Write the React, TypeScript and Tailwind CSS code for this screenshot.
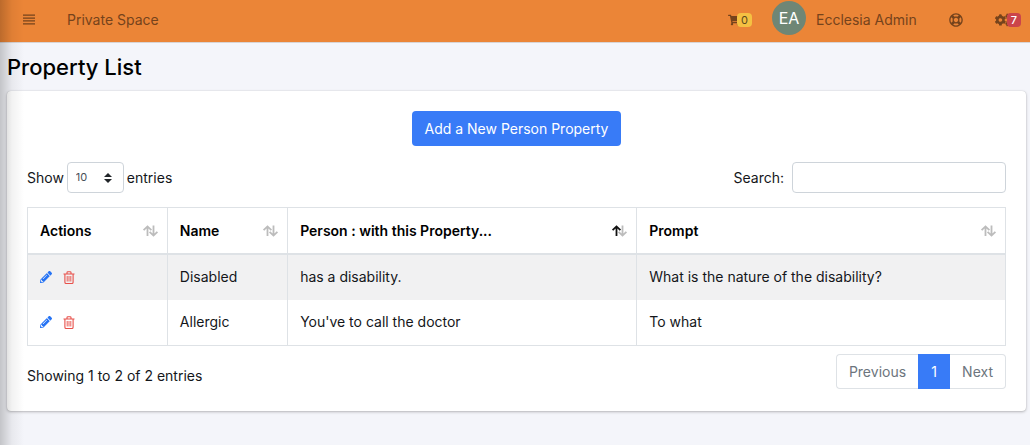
import { FaCogs, FaPencilAlt, FaRegLifeRing, FaShoppingCart } from "react-icons/fa";

type Sort = "none" | "asc";

const columns: { title: string; width: string; sort: Sort }[] = [
  { title: "Actions", width: "w-[14.3%]", sort: "none" },
  { title: "Name", width: "w-[12.3%]", sort: "none" },
  { title: "Person : with this Property...", width: "w-[35.7%]", sort: "asc" },
  { title: "Prompt", width: "w-[37.7%]", sort: "none" },
];

const rows = [
  { name: "Disabled", property: "has a disability.", prompt: "What is the nature of the disability?" },
  { name: "Allergic", property: "You've to call the doctor", prompt: "To what" },
];

function SortIcon({ sort }: { sort: Sort }) {
  return (
    <svg viewBox="0 0 17 12" className="h-3 w-[17px] shrink-0" fill="none" strokeWidth="1.8" aria-hidden="true">
      <path d="M11.5 0.5v10M7.6 6.8l3.9 3.8 3.9-3.8" stroke="#bcbcbc" />
      <path d="M5.5 11v-9.5M1.6 5.2l3.9-3.8 3.9 3.8" stroke={sort === "asc" ? "#111" : "#bcbcbc"} />
    </svg>
  );
}

function MenuIcon() {
  return (
    <svg viewBox="0 0 12 11" className="h-[11px] w-3" fill="currentColor" aria-hidden="true">
      <path d="M0 0.5h12v1.3H0zM0 3.4h12v1.3H0zM0 6.3h12v1.3H0zM0 9.2h12v1.3H0z" />
    </svg>
  );
}

function TrashIcon() {
  return (
    <svg viewBox="0 0 12 13" className="h-[13px] w-3" fill="none" stroke="currentColor" aria-hidden="true">
      <path d="M0.5 3h11M4 3V1.6q0-.9.9-.9h2.2q.9 0 .9.9V3M1.9 3v8.2q0 1.3 1.2 1.3h5.8q1.2 0 1.2-1.3V3" strokeWidth="1.1" />
      <path d="M4.2 5v5.5M6 5v5.5M7.8 5v5.5" strokeWidth="0.9" />
    </svg>
  );
}

function TopBar() {
  return (
    <header className="flex h-[43px] items-center border-b border-[#d8d4d4] bg-[#eb8537] pr-[9px] pl-[23px] text-[#75431c]">
      <button aria-label="Toggle menu" className="mr-8 pb-[3px]">
        <MenuIcon />
      </button>
      <a href="#" className="pb-[3px]">Private Space</a>
      <nav className="ml-auto flex h-full items-center pb-[3px]">
        <a href="#" aria-label="Cart" className="flex items-center">
          <FaShoppingCart className="size-3" />
          <span className="-ml-[3px] rounded-sm bg-[#f5c142] px-1 text-[11px] leading-[14px] text-[#5b4a1c]">0</span>
        </a>
        <a href="#" className="ml-5 flex items-center gap-[10px]">
          <span className="flex size-[34px] -translate-y-[2px] items-center justify-center rounded-full bg-[#6f8675] text-base text-white">EA</span>
          Ecclesia Admin
        </a>
        <a href="#" aria-label="Help" className="ml-8">
          <FaRegLifeRing className="size-[14px]" />
        </a>
        <a href="#" aria-label="Settings" className="ml-8 flex items-center">
          <FaCogs className="size-4" />
          <span className="-ml-1 rounded-sm bg-[#cb444a] px-1 text-[11px] leading-[14px] font-medium text-white">7</span>
        </a>
      </nav>
    </header>
  );
}

export default function App() {
  return (
    <div className="relative min-h-screen bg-[#f4f5fa] font-['Inter',sans-serif] text-sm text-[#14161a]">
      <TopBar />
      <main className="pr-1 pb-8 pl-[7px]">
        <h1 className="pt-2 pb-[7px] text-[22px] leading-[33px] font-medium text-black">Property List</h1>
        <section className="rounded bg-white px-5 pt-5 pb-[22px] shadow-[0_0_1px_rgba(0,0,0,0.2),0_1px_3px_rgba(0,0,0,0.25)]">
          <div className="flex justify-center">
            <button className="h-[35px] rounded bg-[#387bf7] px-3 text-white">Add a New Person Property</button>
          </div>
          <div className="mt-4 flex items-center justify-between">
            <label className="flex items-center gap-[3px]">
              Show
              <span className="relative">
                <select className="h-[31px] w-[57px] appearance-none rounded border border-[#ced4da] bg-white pl-2 text-[11px] text-[#495057]">
                  <option>10</option>
                </select>
                <svg viewBox="0 0 8 10" className="pointer-events-none absolute top-[11px] right-3 h-[10px] w-2" aria-hidden="true">
                  <path d="M0 4l4-4 4 4zM0 6l4 4 4-4z" fill="#212529" />
                </svg>
              </span>
              entries
            </label>
            <label className="flex items-center gap-2">
              Search:
              <input type="search" className="h-[31px] w-[214px] rounded border border-[#ced4da] bg-white px-2" />
            </label>
          </div>
          <table className="mt-[14px] w-full table-fixed border-collapse border border-[#dee2e6] text-left">
            <thead>
              <tr className="h-[46px]">
                {columns.map((c) => (
                  <th key={c.title} className={`${c.width} border border-b-2 border-[#dee2e6] pt-[2px] pr-2 pl-3 font-semibold text-black`}>
                    <div className="flex items-center justify-between">
                      {c.title}
                      <SortIcon sort={c.sort} />
                    </div>
                  </th>
                ))}
              </tr>
            </thead>
            <tbody>
              {rows.map((r) => (
                <tr key={r.name} className="h-[46px] odd:bg-[#f1f1f2]">
                  <td className="border-x border-[#dee2e6] px-3">
                    <div className="flex items-center gap-[11px]">
                      <button aria-label={`Edit ${r.name}`} className="text-[#2573f5]"><FaPencilAlt className="size-3" /></button>
                      <button aria-label={`Delete ${r.name}`} className="text-[#e8504a]"><TrashIcon /></button>
                    </div>
                  </td>
                  <td className="border-x border-[#dee2e6] px-3">{r.name}</td>
                  <td className="border-x border-[#dee2e6] px-3">{r.property}</td>
                  <td className="border-x border-[#dee2e6] px-3">{r.prompt}</td>
                </tr>
              ))}
            </tbody>
          </table>
          <div className="mt-2 flex items-center justify-between">
            <p className="pt-2">Showing 1 to 2 of 2 entries</p>
            <nav aria-label="Pagination" className="flex h-[35px] text-[#6c757d]">
              <button className="rounded-l border border-r-0 border-[#dee2e6] px-3">Previous</button>
              <button aria-current="page" className="w-8 bg-[#387bf7] text-white">1</button>
              <button className="rounded-r border border-l-0 border-[#dee2e6] px-3">Next</button>
            </nav>
          </div>
        </section>
      </main>
      <div className="pointer-events-none absolute inset-y-0 left-0 w-6 bg-linear-to-r from-black/20 via-black/5 to-transparent" />
    </div>
  );
}
